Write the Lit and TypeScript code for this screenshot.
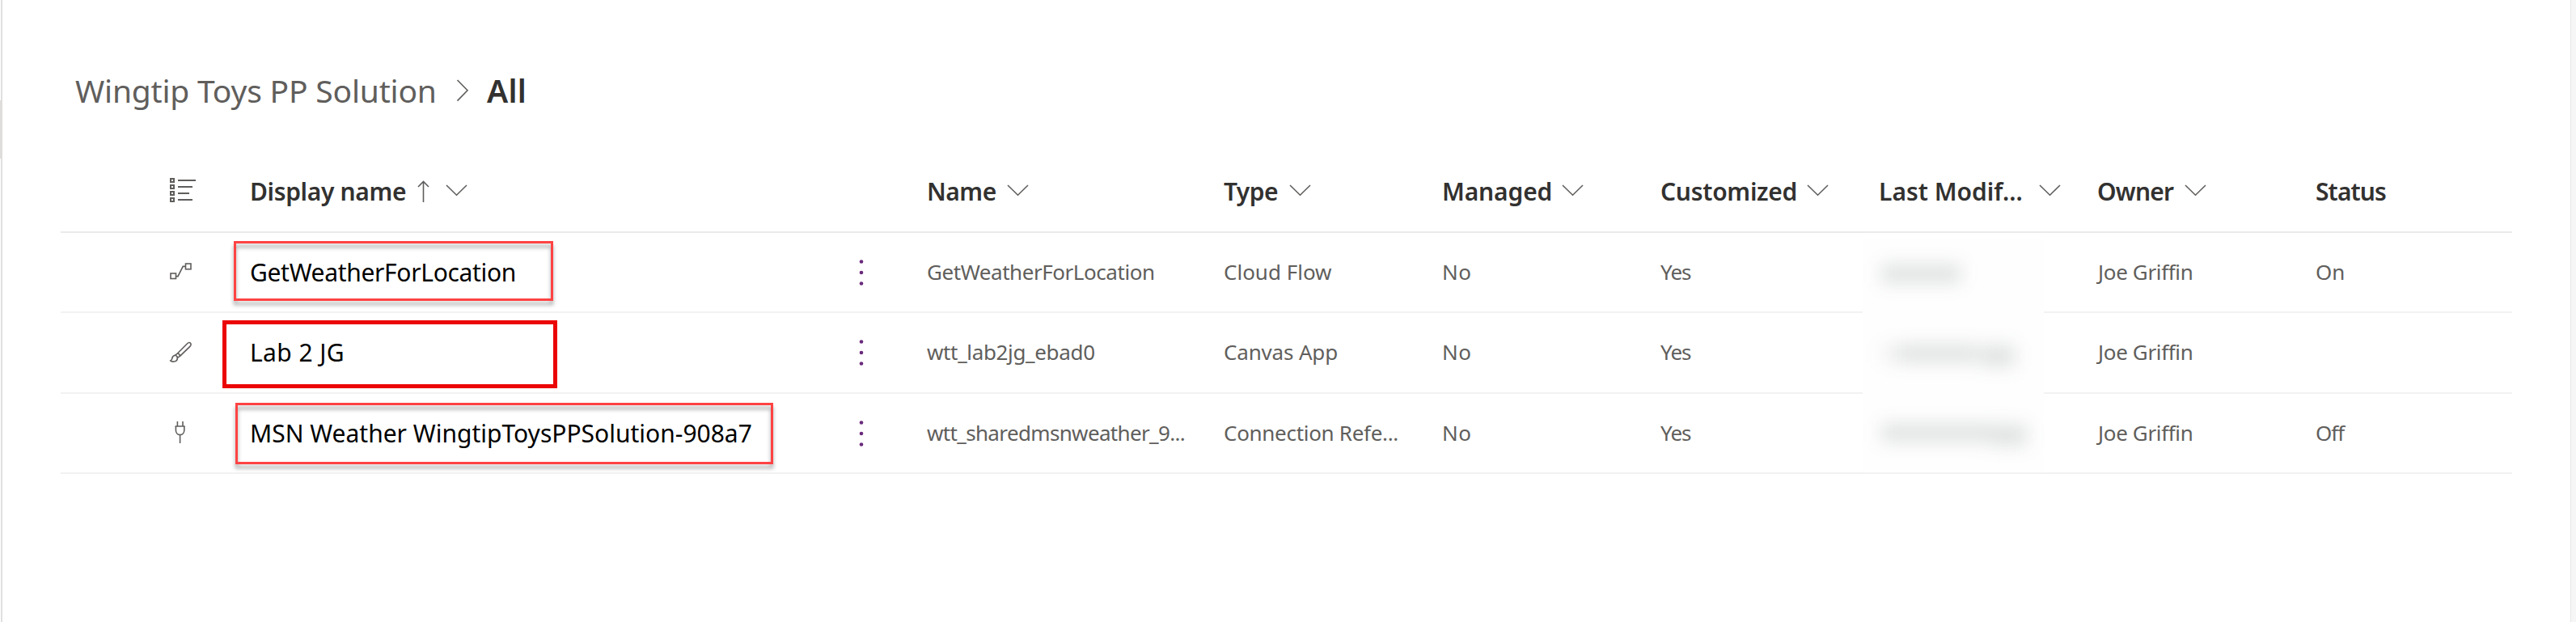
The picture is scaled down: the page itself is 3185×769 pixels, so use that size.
import { LitElement, html, css, svg, nothing } from "lit";
import { customElement, property } from "lit/decorators.js";
import { styleMap } from "lit/directives/style-map.js";

type Text = [text: string, tracking: number];

interface Column {
  label: Text;
  labelWidth: number;
  menu: boolean;
  sorted?: boolean;
}

interface Row {
  icon: "flow" | "brush" | "plug";
  title: Text;
  name: Text;
  type: Text;
  owner: string;
  status?: Text;
}

const displayColumn: Column = { label: ["Display name", -0.35], labelWidth: 207, menu: true, sorted: true };

const columns: Column[] = [
  { label: ["Name", -0.5], labelWidth: 99, menu: true },
  { label: ["Type", -0.6], labelWidth: 81, menu: true },
  { label: ["Managed", -0.15], labelWidth: 148, menu: true },
  { label: ["Customized", -0.28], labelWidth: 181, menu: true },
  { label: ["Last Modif...", 0], labelWidth: 198, menu: true },
  { label: ["Owner", -0.8], labelWidth: 108, menu: true },
  { label: ["Status", -0.9], labelWidth: 100, menu: false },
];

const rows: Row[] = [
  {
    icon: "flow",
    title: ["GetWeatherForLocation", -0.32],
    name: ["GetWeatherForLocation", -0.45],
    type: ["Cloud Flow", 0],
    owner: "Joe Griffin",
    status: ["On", 0],
  },
  {
    icon: "brush",
    title: ["Lab 2 JG", 0.4],
    name: ["wtt_lab2jg_ebad0", -0.35],
    type: ["Canvas App", -0.17],
    owner: "Joe Griffin",
  },
  {
    icon: "plug",
    title: ["MSN Weather WingtipToysPPSolution-908a7", 0],
    name: ["wtt_sharedmsnweather_9...", -0.65],
    type: ["Connection Refe...", -0.3],
    owner: "Joe Griffin",
    status: ["Off", -1],
  },
];

const glyphs = {
  flow: svg`
    <rect x="2" y="16" width="6.5" height="6.5"/>
    <rect x="20.5" y="4" width="6.5" height="6.8"/>
    <path d="M8.5 19.6H11L17.2 7.4H20.5"/>`,
  brush: svg`
    <path d="M10.6 15.8 L22.3 4 C23.6 2.6 25.4 2.2 26.5 3.2 C27.6 4.3 27.2 6.1 25.9 7.4 L13.4 19.4"/>
    <path d="M10.6 15.8 C12.4 16.2 13.3 17.4 13.4 19.4 L10.4 21.4 C10.2 19.6 9.2 18.4 7.6 18.2 Z"/>
    <path d="M7.6 18.2 C4.8 18.6 4 20.4 3.8 22.2 C3.6 23.8 3 24.6 1.8 25 C2.6 26 4.4 26.2 6.2 26 C9 25.6 10.4 24 10.4 21.4"/>`,
  plug: svg`
    <path d="M10.4 0V6M17 0V6M7.6 6H19.6"/>
    <path d="M8.4 6V11C8.4 14.2 10.6 16.6 13.6 16.6C16.6 16.6 18.8 14.2 18.8 11V6M13.6 16.6V27"/>`,
};

const tracked = ([text, tracking]: Text) =>
  html`<span style=${styleMap({ letterSpacing: `${tracking}px` })}>${text}</span>`;

const chevronDown = html`<svg class="chevron" width="27" height="15" viewBox="0 0 27 15">
  <path d="M1 1L13.5 13.2L26 1" />
</svg>`;

@customElement("solution-breadcrumb")
export class SolutionBreadcrumb extends LitElement {
  static styles = css`
    :host {
      display: flex;
      align-items: center;
      height: 100px;
      font-size: 39px;
      line-height: 54px;
      color: #605e5c;
      white-space: nowrap;
    }
    .parent {
      width: 471px;
      letter-spacing: -0.2px;
    }
    .separator {
      margin-right: 22px;
      fill: none;
      stroke: #605e5c;
      stroke-width: 1.6;
    }
    .current {
      font-weight: 600;
      color: #323130;
      letter-spacing: 0.3px;
    }
  `;
  render() {
    return html`
      <span class="parent">Wingtip Toys PP Solution</span>
      <svg class="separator" width="16" height="28" viewBox="0 0 16 28">
        <path d="M1.5 1L14 13.8L1.5 26.6" />
      </svg>
      <span class="current">All</span>
    `;
  }
}

@customElement("solution-table")
export class SolutionTable extends LitElement {
  @property({ attribute: false }) rows: Row[] = [];

  static styles = css`
    :host {
      display: block;
      width: 3031px;
      white-space: nowrap;
    }
    .head,
    .row {
      display: grid;
      grid-template-columns: 233px 737px 100px 367px repeat(5, 270px) 244px;
      align-items: center;
      box-sizing: border-box;
    }
    .head {
      height: 100px;
      border-bottom: 2px solid #ebebeb;
      font-size: 30px;
      font-weight: 600;
      line-height: 42px;
      color: #323130;
    }
    .row {
      height: 99px;
      border-bottom: 2px solid #f2f2f2;
      font-size: 26px;
      line-height: 36px;
      color: #605e5c;
    }
    .row:nth-child(3) {
      height: 100px;
    }
    .heading {
      display: flex;
      align-items: center;
      padding-left: 1px;
    }
    .label {
      flex: none;
    }
    .chevron,
    .arrow {
      flex: none;
      fill: none;
      stroke: #605e5c;
      stroke-width: 1.6;
      margin-bottom: 3px;
    }
    .arrow {
      margin-right: 20px;
      margin-bottom: 0;
    }
    .list {
      margin-left: 135px;
      margin-bottom: 4px;
      display: block;
      fill: none;
      stroke: #605e5c;
      stroke-width: 2;
    }
    .glyph {
      align-self: start;
      margin: 34px 0 0 134px;
      fill: none;
      stroke: #605e5c;
      stroke-width: 1.6;
    }
    .title {
      font-size: 30px;
      line-height: 42px;
      color: #000;
      padding-left: 1px;
    }
    .cell {
      padding: 0 0 2px 1px;
    }
    .owner {
      padding-left: 2px;
      letter-spacing: -0.35px;
    }
    .more {
      margin-left: 15px;
      fill: #6a2a7c;
    }
  `;

  private heading(c: Column) {
    return html`<div class="heading">
      <span class="label" style=${styleMap({ width: `${c.labelWidth}px` })}>${tracked(c.label)}</span>
      ${c.sorted
        ? html`<svg class="arrow" width="15" height="28" viewBox="0 0 15 28">
            <path d="M7.5 27V1.5M1 8L7.5 1.5L14 8" />
          </svg>`
        : nothing}
      ${c.menu ? chevronDown : nothing}
    </div>`;
  }

  render() {
    return html`
      <div class="head">
        <svg class="list" width="33" height="30" viewBox="0 0 33 30">
          ${[22, 18, 14, 18].map(
            (w, i) => svg`<rect x="1" y=${1 + i * 8} width="4" height="4"/><path d=${`M10 ${3 + i * 8}h${w}`}/>`
          )}
        </svg>
        ${this.heading(displayColumn)}
        <span></span>
        ${columns.map((c) => this.heading(c))}
      </div>
      ${this.rows.map(
        (r) => html`<div class="row">
          <svg class="glyph" width="29" height="29" viewBox="0 0 29 29">${glyphs[r.icon]}</svg>
          <div class="title">${tracked(r.title)}</div>
          <svg class="more" width="10" height="34" viewBox="0 0 10 34">
            <circle cx="5" cy="3.5" r="2.3" />
            <circle cx="5" cy="17" r="2.3" />
            <circle cx="5" cy="30.5" r="2.3" />
          </svg>
          <div class="cell">${tracked(r.name)}</div>
          <div class="cell">${tracked(r.type)}</div>
          <div class="cell">${tracked(["No", 0.5])}</div>
          <div class="cell">${tracked(["Yes", -1])}</div>
          <div></div>
          <div class="cell owner">${r.owner}</div>
          <div class="cell">${r.status ? tracked(r.status) : nothing}</div>
        </div>`
      )}
    `;
  }
}

@customElement("app-root")
export class AppRoot extends LitElement {
  static styles = css`
    :host {
      display: block;
      position: relative;
      box-sizing: border-box;
      width: 3185px;
      height: 769px;
      overflow: hidden;
      background: #fff;
      font-family: "Noto Sans", "Open Sans", sans-serif;
    }
    .frame {
      display: flex;
      height: 100%;
    }
    .rail {
      flex: none;
      width: 2px;
      margin-left: 1px;
      background: #e0e0e0;
    }
    .page {
      flex: 1;
      padding: 62px 0 0 72px;
    }
    .crumbs {
      padding-left: 18px;
    }
    .table {
      margin-top: 26px;
    }
    .gutter {
      flex: none;
      width: 6px;
      border-left: 1px solid #e6e6e6;
      background: #f6f6f6;
    }
    .thumb {
      position: absolute;
      left: 0;
      top: 124px;
      width: 3px;
      height: 72px;
      background: #dfdddc;
    }
    .mark {
      position: absolute;
      box-sizing: border-box;
      border: 3px solid #ff4343;
      filter: drop-shadow(0 5px 2.5px rgba(0, 0, 0, 0.36));
    }
    .flow-mark {
      left: 289px;
      top: 298px;
      width: 395px;
      height: 74px;
    }
    .app-mark {
      left: 275px;
      top: 396px;
      width: 414px;
      height: 84px;
      border: 5px solid #eb0606;
      filter: none;
    }
    .connection-mark {
      left: 291px;
      top: 498px;
      width: 665px;
      height: 76px;
    }
    .redaction {
      position: absolute;
      left: 2303px;
      top: 295px;
      width: 224px;
      height: 288px;
      overflow: hidden;
      background: #fefefe;
    }
    .redaction svg {
      display: block;
      filter: blur(11px);
      fill: rgba(50, 58, 58, 0.15);
    }
    .redaction .faint {
      fill: rgba(50, 58, 58, 0.05);
    }
  `;

  render() {
    return html`
      <div class="frame">
        <div class="rail"></div>
        <div class="page">
          <solution-breadcrumb class="crumbs"></solution-breadcrumb>
          <solution-table class="table" .rows=${rows}></solution-table>
        </div>
        <div class="gutter"></div>
      </div>
      <div class="thumb"></div>
      <div class="redaction">
        <svg width="224" height="288" viewBox="0 0 224 288">
          <rect x="23" y="32" width="98" height="23" />
          <rect class="faint" x="22" y="131" width="20" height="22" />
          <rect x="42" y="131" width="100" height="22" />
          <rect x="146" y="132" width="42" height="26" />
          <rect x="23" y="229" width="135" height="22" />
          <rect x="158" y="230" width="45" height="26" />
        </svg>
      </div>
      <div class="mark flow-mark"></div>
      <div class="mark app-mark"></div>
      <div class="mark connection-mark"></div>
    `;
  }
}
